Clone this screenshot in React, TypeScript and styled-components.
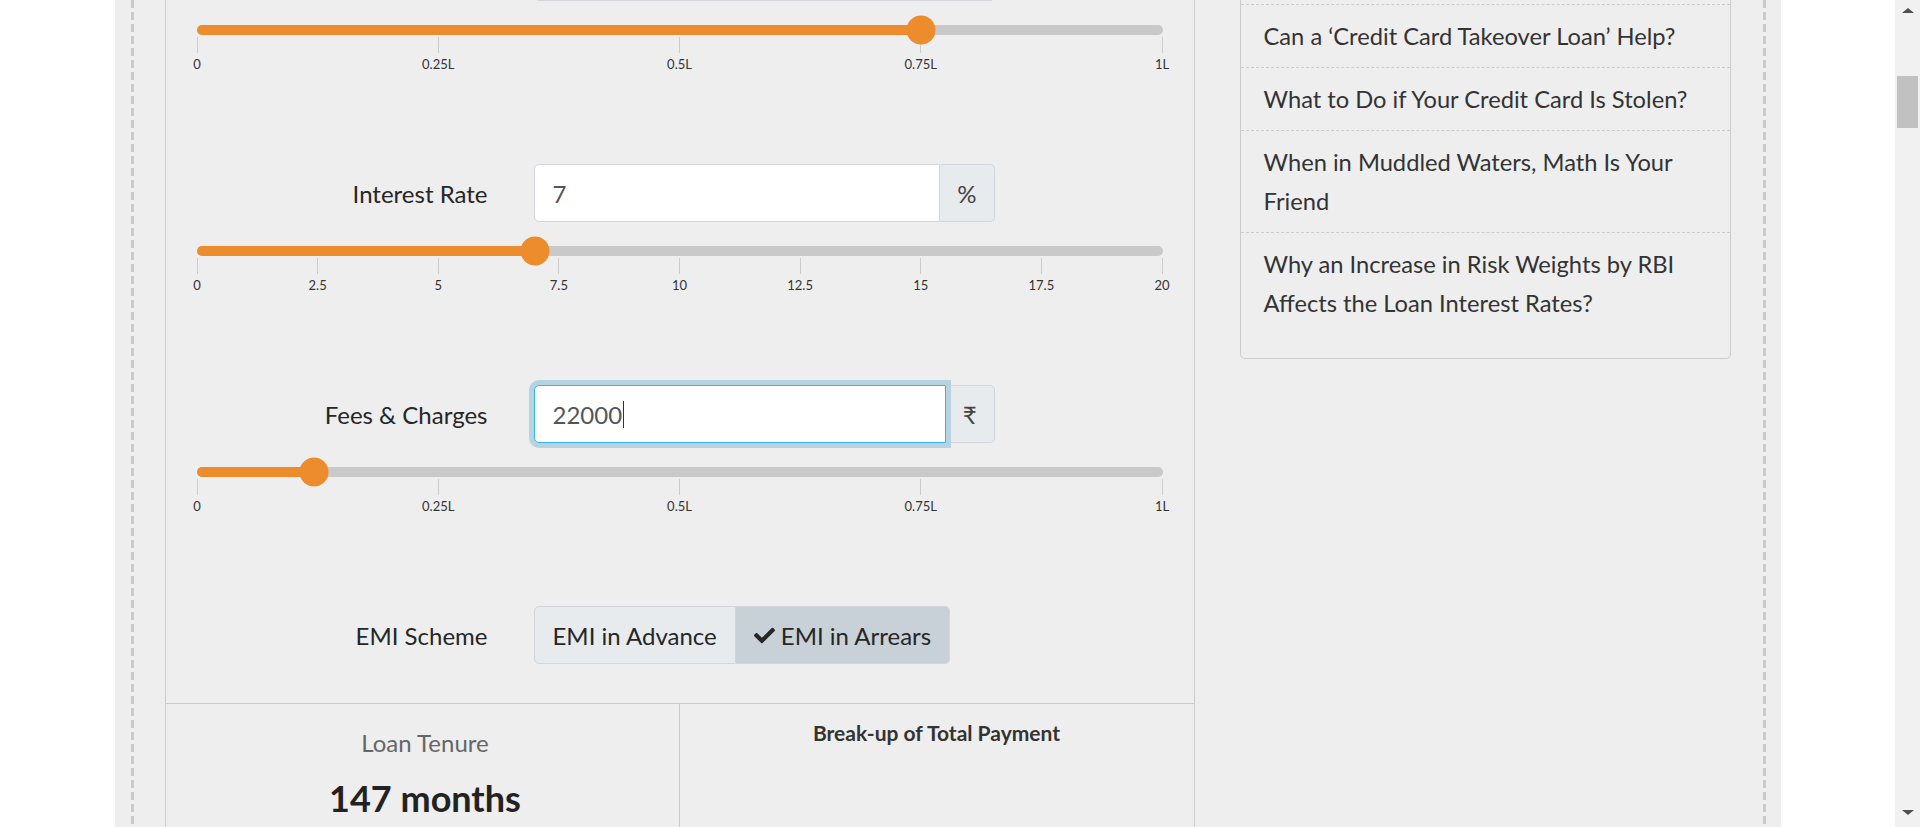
import React from 'react';
import styled, { createGlobalStyle } from 'styled-components';
import { FaCheck } from 'react-icons/fa';

const GlobalStyle = createGlobalStyle`
  * { box-sizing: border-box; }
  html, body { margin: 0; padding: 0; height: 100%; overflow: hidden; background: #fff; }
  body { font-family: Lato, "Open Sans", "Liberation Sans", sans-serif; color: #333; }
  #root { height: 100%; }
`;

const Screen = styled.div`
  display: flex;
  width: 1920px;
  height: 827px;
  overflow: hidden;
`;

const Viewport = styled.div`
  flex: 1;
  display: flex;
  justify-content: center;
  background: #fff;
  overflow: hidden;
`;

const Container = styled.div`
  width: 1666px;
  flex: none;
  background: #eeeeee;
  padding: 0 15px 0 16px;
  display: flex;
`;

const Frame = styled.div`
  flex: 1;
  padding: 0 35px 0 34px;
  background-image:
    repeating-linear-gradient(to bottom, #c9c9c9 0 8px, transparent 8px 12px),
    repeating-linear-gradient(to bottom, #c9c9c9 0 8px, transparent 8px 12px);
  background-size: 3px 100%, 3px 100%;
  background-position: left top, right top;
  background-repeat: no-repeat;
  display: grid;
  grid-template-columns: 1030px 491px;
  column-gap: 45px;
  align-items: start;
`;

const Panel = styled.section`
  margin-top: -57px;
  border-left: 1px solid #cccccc;
  border-right: 1px solid #cccccc;
  padding: 0 31px;
  min-height: 1000px;
`;

const FieldBlock = styled.div`
  margin-bottom: 92px;
`;

const FieldRow = styled.div`
  display: grid;
  grid-template-columns: 291px 461px;
  column-gap: 46px;
  align-items: center;
  height: 58px;
`;

const Label = styled.div`
  text-align: right;
  font-size: 24px;
  color: #262626;
`;

const InputGroup = styled.div`
  display: flex;
  height: 58px;
`;

const InputBox = styled.div<{ $focused?: boolean }>`
  position: relative;
  flex: 1;
  display: flex;
  align-items: center;
  padding: 0 18px;
  background: #fff;
  font-size: 24px;
  color: #555;
  border: 1px solid ${(p) => (p.$focused ? '#39b4ee' : '#d2d6da')};
  border-radius: 5px 0 0 5px;
  box-shadow: ${(p) => (p.$focused ? '0 0 0 5px #b5d3e1' : 'none')};
  z-index: ${(p) => (p.$focused ? 2 : 1)};
`;

const Caret = styled.span`
  display: inline-block;
  width: 1px;
  height: 27px;
  margin-left: 1px;
  background: #333;
`;

const Addon = styled.div`
  display: flex;
  align-items: center;
  justify-content: center;
  padding: 0 17px;
  background: #e8ebee;
  border: 1px solid #d2d6da;
  border-left: none;
  border-radius: 0 5px 5px 0;
  font-size: 24px;
  color: #444;
`;

const SliderBox = styled.div`
  margin-top: 24px;
`;

const Track = styled.div`
  position: relative;
  height: 10px;
  border-radius: 5px;
  background: #c9c9c9;
`;

const Fill = styled.div`
  height: 100%;
  border-radius: 5px;
  background: #ec8c2d;
`;

const Thumb = styled.div`
  position: absolute;
  top: 50%;
  width: 29px;
  height: 29px;
  border-radius: 50%;
  background: #ec8c2d;
  transform: translate(-50%, -50%);
`;

const Scale = styled.div`
  display: flex;
  justify-content: space-between;
  margin-top: 2px;
`;

const Tick = styled.div`
  width: 1px;
  display: flex;
  flex-direction: column;
  align-items: center;
`;

const TickLine = styled.div`
  width: 1px;
  height: 16px;
  background: #cccccc;
`;

const TickLabel = styled.div`
  margin-top: 3px;
  font-size: 13px;
  line-height: 16px;
  white-space: nowrap;
  color: #333;
`;

const EmiRow = styled(FieldRow)`
  margin-bottom: 39px;
`;

const ButtonGroup = styled.div`
  display: flex;
  height: 58px;
  justify-self: start;
`;

const ToggleButton = styled.button<{ $active?: boolean }>`
  display: flex;
  align-items: center;
  gap: 6px;
  padding: 0 18px;
  margin: 0;
  font-family: inherit;
  font-size: 24px;
  color: #262626;
  background: ${(p) => (p.$active ? '#c9d1d8' : '#e8ebee')};
  border: 1px solid #d2d6da;
  cursor: pointer;
  &:first-child {
    border-radius: 5px 0 0 5px;
  }
  &:last-child {
    border-radius: 0 5px 5px 0;
    border-left: none;
  }
`;

const Results = styled.div`
  margin: 0 -31px;
  border-top: 1px solid #cccccc;
  display: grid;
  grid-template-columns: 513px 1fr;
  min-height: 300px;
`;

const ResultCol = styled.div<{ $divider?: boolean }>`
  display: flex;
  flex-direction: column;
  align-items: center;
  border-left: ${(p) => (p.$divider ? '1px solid #cccccc' : 'none')};
  padding-top: ${(p) => (p.$divider ? '15px' : '22px')};
  padding-left: ${(p) => (p.$divider ? '0' : '6px')};
`;

const ResultLabel = styled.div`
  font-size: 24px;
  line-height: 34px;
  color: #666;
`;

const ResultValue = styled.div`
  margin-top: 16px;
  font-size: 36px;
  line-height: 44px;
  font-weight: 700;
  color: #222;
`;

const ChartTitle = styled.div`
  font-size: 21px;
  line-height: 28px;
  font-weight: 700;
  color: #333;
`;

const Sidebar = styled.aside`
  margin-top: -58px;
  border: 1px solid #cccccc;
  border-top: none;
  border-radius: 0 0 5px 5px;
  padding-bottom: 24px;
`;

const SideItem = styled.div`
  padding: 12px 23px 11px;
  font-size: 23.7px;
  line-height: 39px;
  color: #333;
  & + & {
    border-top: 1px dashed #cccccc;
  }
`;

const ScrollBar = styled.div`
  width: 25px;
  flex: none;
  background: #f1f1f1;
  display: flex;
  flex-direction: column;
  align-items: center;
`;

const ArrowUp = styled.div`
  margin-top: 8px;
  width: 0;
  height: 0;
  border-left: 6px solid transparent;
  border-right: 6px solid transparent;
  border-bottom: 5px solid #505050;
`;

const ScrollThumb = styled.div`
  margin-top: 63px;
  width: 21px;
  height: 52px;
  background: #c1c1c1;
`;

const ArrowDown = styled.div`
  margin-top: auto;
  margin-bottom: 12px;
  width: 0;
  height: 0;
  border-left: 6px solid transparent;
  border-right: 6px solid transparent;
  border-top: 5px solid #505050;
`;

type SliderProps = { value: number; marks: string[] };

function Slider({ value, marks }: SliderProps) {
  const pct = `${value * 100}%`;
  return (
    <SliderBox>
      <Track>
        <Fill style={{ width: pct }} />
        <Thumb style={{ left: pct }} />
      </Track>
      <Scale>
        {marks.map((m) => (
          <Tick key={m}>
            <TickLine />
            <TickLabel>{m}</TickLabel>
          </Tick>
        ))}
      </Scale>
    </SliderBox>
  );
}

type FieldProps = {
  label: string;
  value: string;
  unit: string;
  focused?: boolean;
  slider: number;
  marks: string[];
};

function Field({ label, value, unit, focused, slider, marks }: FieldProps) {
  return (
    <FieldBlock>
      <FieldRow>
        <Label>{label}</Label>
        <InputGroup>
          <InputBox $focused={focused}>
            {value}
            {focused && <Caret />}
          </InputBox>
          <Addon>{unit}</Addon>
        </InputGroup>
      </FieldRow>
      <Slider value={slider} marks={marks} />
    </FieldBlock>
  );
}

const lakhMarks = ['0', '0.25L', '0.5L', '0.75L', '1L'];
const rateMarks = ['0', '2.5', '5', '7.5', '10', '12.5', '15', '17.5', '20'];

const articles = [
  'How Does a Balance Transfer Work?',
  'Can a ‘Credit Card Takeover Loan’ Help?',
  'What to Do if Your Credit Card Is Stolen?',
  'When in Muddled Waters, Math Is Your Friend',
  'Why an Increase in Risk Weights by RBI Affects the Loan Interest Rates?',
];

export default function App() {
  return (
    <>
      <GlobalStyle />
      <Screen>
        <Viewport>
          <Container>
            <Frame>
              <Panel>
                <Field label="Loan Amount" value="75000" unit="₹" slider={0.75} marks={lakhMarks} />
                <Field label="Interest Rate" value="7" unit="%" slider={0.35} marks={rateMarks} />
                <Field label="Fees & Charges" value="22000" unit="₹" focused slider={0.122} marks={lakhMarks} />
                <EmiRow>
                  <Label>EMI Scheme</Label>
                  <ButtonGroup>
                    <ToggleButton>EMI in Advance</ToggleButton>
                    <ToggleButton $active>
                      <FaCheck size={21} />
                      EMI in Arrears
                    </ToggleButton>
                  </ButtonGroup>
                </EmiRow>
                <Results>
                  <ResultCol>
                    <ResultLabel>Loan Tenure</ResultLabel>
                    <ResultValue>147 months</ResultValue>
                  </ResultCol>
                  <ResultCol $divider>
                    <ChartTitle>Break-up of Total Payment</ChartTitle>
                  </ResultCol>
                </Results>
              </Panel>
              <Sidebar>
                {articles.map((a) => (
                  <SideItem key={a}>{a}</SideItem>
                ))}
              </Sidebar>
            </Frame>
          </Container>
        </Viewport>
        <ScrollBar>
          <ArrowUp />
          <ScrollThumb />
          <ArrowDown />
        </ScrollBar>
      </Screen>
    </>
  );
}
